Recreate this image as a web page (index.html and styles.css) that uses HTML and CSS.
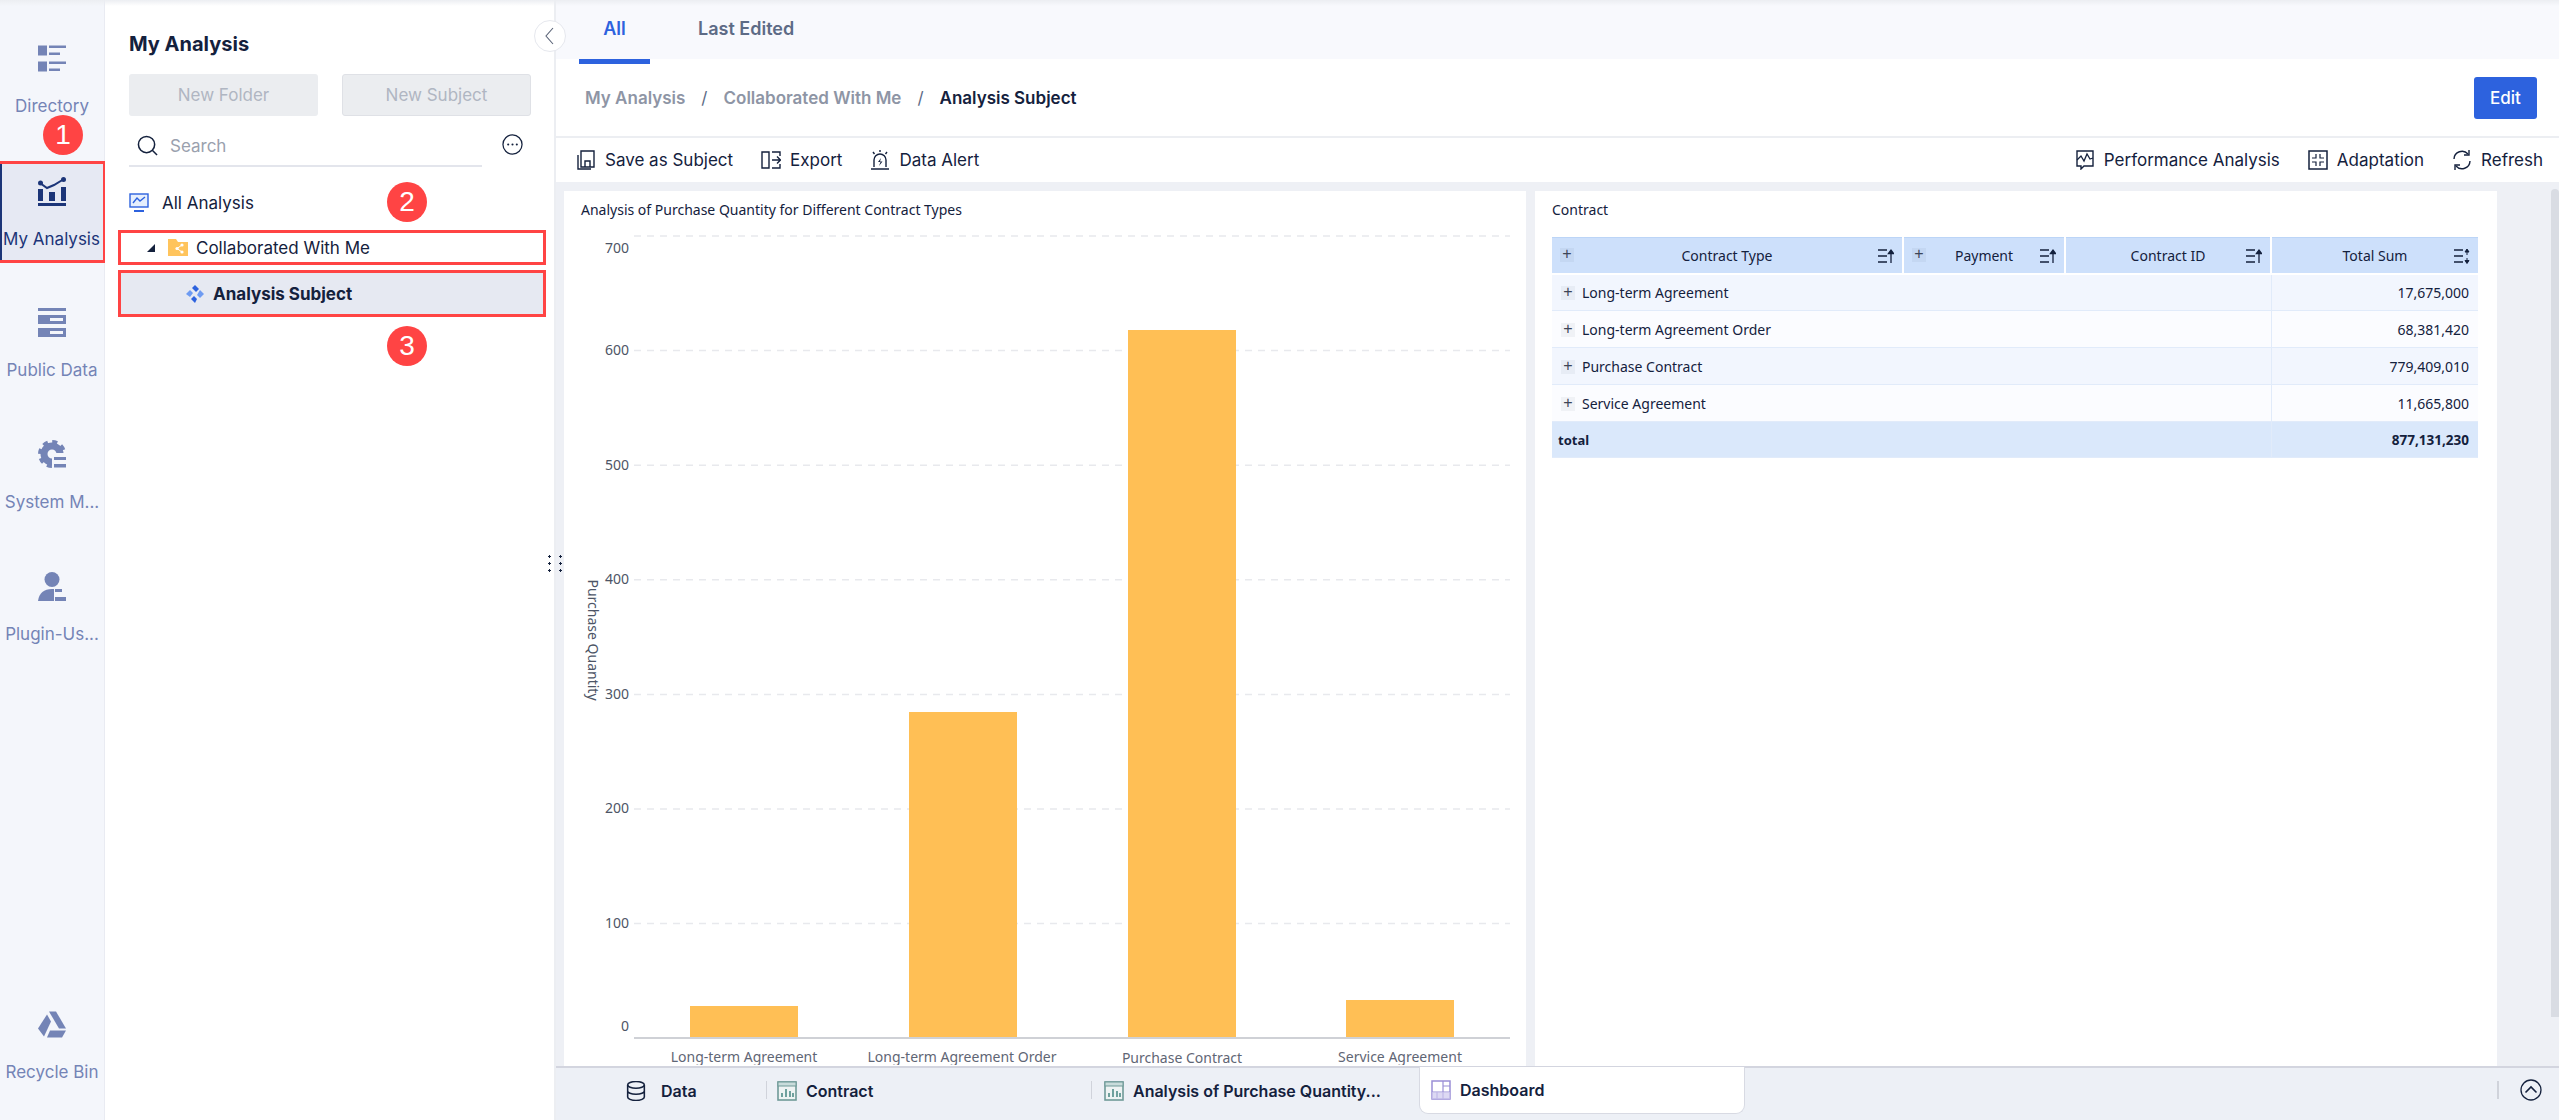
FILE: index.html
```html
<!DOCTYPE html>
<html lang="en">
<head>
  <meta charset="UTF-8">
  <title>My Analysis</title>
  <link rel="stylesheet" href="styles.css">
</head>
<body>
  <div class="top-shade"></div>

  <!-- left rail -->
  <nav class="rail">
    <div class="rail-item">
      <svg class="rail-icon" viewBox="0 0 28 26"><rect x="0" y="0" width="9" height="10"/><rect x="11" y="0" width="17" height="2.5"/><rect x="11" y="7" width="11" height="2.5"/><rect x="0" y="16" width="9" height="10"/><rect x="11" y="16" width="17" height="2.5"/><rect x="11" y="23" width="11" height="2.5"/></svg>
      <span>Directory</span>
    </div>
    <div class="rail-item active">
      <svg class="rail-icon" viewBox="0 0 28 29"><path d="M2 6 L9 11 L16 8 L26 2" fill="none" stroke="#1c3578" stroke-width="2"/><circle cx="2.5" cy="6" r="2.5"/><circle cx="25.5" cy="2.5" r="2.5"/><rect x="0" y="12" width="5" height="12"/><rect x="11" y="15" width="6" height="9"/><rect x="23" y="10" width="5" height="14"/><rect x="0" y="26" width="28" height="3"/></svg>
      <span>My Analysis</span>
    </div>
    <div class="rail-item">
      <svg class="rail-icon" viewBox="0 0 28 29"><rect x="0" y="0" width="28" height="3"/><path fill-rule="evenodd" d="M0 7H28V16H0ZM12 10V13H25V10Z"/><path fill-rule="evenodd" d="M0 20H28V29H0ZM12 23V26H25V23Z"/></svg>
      <span>Public Data</span>
    </div>
    <div class="rail-item">
      <svg class="rail-icon" viewBox="0 0 28 29"><circle cx="14" cy="14" r="8" fill="none" stroke="#7484b6" stroke-width="7"/><circle cx="14" cy="14" r="12" fill="none" stroke="#7484b6" stroke-width="4" stroke-dasharray="5 4.4"/><rect x="14" y="13" width="14" height="16" fill="#f4f6fb"/><rect x="16" y="17" width="12" height="3"/><rect x="16" y="24" width="12" height="3.5"/></svg>
      <span>System M...</span>
    </div>
    <div class="rail-item">
      <svg class="rail-icon" viewBox="0 0 28 29"><circle cx="14" cy="7.5" r="7.5"/><path d="M0 29 C1 21 6 17 14 17 L16 17 L16 29Z"/><rect x="17" y="17" width="7" height="3"/><rect x="17" y="25" width="11" height="4"/></svg>
      <span>Plugin-Us...</span>
    </div>
    <div class="rail-item bottom">
      <svg class="rail-icon" viewBox="0 0 28 26"><path d="M11 0H18L28 17H21Z"/><path d="M9 3L13 10L6 25L0 17Z"/><path d="M12 19H28L24 26H9Z"/></svg>
      <span>Recycle Bin</span>
    </div>
  </nav>

  <!-- tree panel -->
  <aside class="panel">
    <h2 class="panel-title">My Analysis</h2>
    <div class="panel-btns">
      <button class="btn-off">New Folder</button>
      <button class="btn-off bordered">New Subject</button>
    </div>
    <div class="search-row">
      <div class="search">
        <svg class="ico-search" viewBox="0 0 22 22"><circle cx="10" cy="10" r="8.5" fill="none" stroke="#14213d" stroke-width="1.6"/><path d="M16 16L21 21" stroke="#14213d" stroke-width="1.6"/></svg>
        <span>Search</span>
      </div>
      <svg class="ico-more" viewBox="0 0 22 22"><circle cx="11" cy="11" r="10" fill="none" stroke="#14213d" stroke-width="1.3"/><circle cx="6.5" cy="11" r="1.1" fill="#14213d"/><circle cx="11" cy="11" r="1.1" fill="#14213d"/><circle cx="15.5" cy="11" r="1.1" fill="#14213d"/></svg>
    </div>
    <div class="tree-all">
      <svg class="ico-all" viewBox="0 0 20 20"><rect x="1" y="1" width="18" height="13" fill="#e6effd" stroke="#2d62de" stroke-width="1.4"/><path d="M4 10L8 5L11 8L16 4" fill="none" stroke="#2d62de" stroke-width="1.4"/><rect x="5" y="17" width="10" height="2" fill="#2d62de"/></svg>
      <span>All Analysis</span>
    </div>
    <div class="tree-folder">
      <i class="tri"></i>
      <svg class="ico-folder" viewBox="0 0 20 17"><path d="M0 0H8L10 3H20V17H0Z" fill="#ffc45c"/><circle cx="14" cy="6" r="1.6" fill="#fff"/><circle cx="9" cy="9.5" r="1.6" fill="#fff"/><circle cx="14" cy="13" r="1.6" fill="#fff"/><path d="M14 6L9 9.5L14 13" fill="none" stroke="#fff"/></svg>
      <span>Collaborated With Me</span>
    </div>
    <div class="tree-subject">
      <svg class="ico-subject" viewBox="0 0 18 18"><path d="M9 0L13 4L10 7L6 3Z" fill="#2d62de"/><path d="M14 5L18 9L14 13L11 10Z" fill="#6e9bf2"/><path d="M8 11L11 14L9 18L5 14Z" fill="#2d62de"/><path d="M4 5L7 8L4 12L0 9Z" fill="#6e9bf2"/></svg>
      <span>Analysis Subject</span>
    </div>
    <b class="badge b1">1</b>
    <b class="badge b2">2</b>
    <b class="badge b3">3</b>
  </aside>

  <!-- main area -->
  <main class="main">
    <div class="tabs">
      <div class="tab on">All</div>
      <div class="tab">Last Edited</div>
    </div>
    <div class="crumbs">
      <span class="crumb">My Analysis</span><i>/</i>
      <span class="crumb">Collaborated With Me</span><i>/</i>
      <span class="crumb now">Analysis Subject</span>
      <button class="btn-edit">Edit</button>
    </div>
    <div class="toolbar">
      <div class="tool">
        <svg viewBox="0 0 18 20"><path d="M4 1H17V17H4Z M8 17V11H13V17" fill="none" stroke="#14213d" stroke-width="1.4"/><path d="M1 5V19H14" fill="none" stroke="#14213d" stroke-width="1.4"/></svg>
        <span>Save as Subject</span>
      </div>
      <div class="tool">
        <svg viewBox="0 0 20 20"><path d="M1 2H8V18H1Z M11 2H19V6 M19 14V18H11" fill="none" stroke="#14213d" stroke-width="1.4"/><path d="M11 10H19 M16 6.5L19.5 10L16 13.5" fill="none" stroke="#14213d" stroke-width="1.4"/></svg>
        <span>Export</span>
      </div>
      <div class="tool">
        <svg viewBox="0 0 18 20"><path d="M3 17V10A6 6 0 0 1 15 10V17 M0 19H18 M9 0V2 M2 2L3.5 4 M16 2L14.5 4" fill="none" stroke="#14213d" stroke-width="1.4"/><path d="M10 8L7 12H9.5L8 16L11.5 11.5H9Z" fill="#14213d"/></svg>
        <span>Data Alert</span>
      </div>
      <div class="tool push">
        <svg viewBox="0 0 18 20"><path d="M1 1H17V16H8L5 19V16H1Z" fill="none" stroke="#14213d" stroke-width="1.4"/><path d="M1 10L5 6L8 11L11 4L14 9L17 8" fill="none" stroke="#14213d" stroke-width="1.3"/></svg>
        <span>Performance Analysis</span>
      </div>
      <div class="tool">
        <svg viewBox="0 0 20 20"><rect x="1" y="1" width="18" height="18" fill="none" stroke="#14213d" stroke-width="1.5"/><path d="M8 4V8H4 M12 4V8H16 M8 16V12H4 M12 16V12H16" fill="none" stroke="#14213d" stroke-width="1.2"/></svg>
        <span>Adaptation</span>
      </div>
      <div class="tool">
        <svg viewBox="0 0 20 20"><path d="M2 9A8 8 0 0 1 16 4 M18 11A8 8 0 0 1 4 16" fill="none" stroke="#14213d" stroke-width="1.4"/><path d="M17 0V5H12 M3 20V15H8" fill="none" stroke="#14213d" stroke-width="1.4"/></svg>
        <span>Refresh</span>
      </div>
    </div>

    <div class="dash">
      <section class="card">
        <div class="card-title">Analysis of Purchase Quantity for Different Contract Types</div>
        <svg class="chart" viewBox="0 0 962 838" width="962" height="838">
          <g class="grid">
            <line x1="70" x2="946" y1="9" y2="9"/>
            <line x1="70" x2="946" y1="123.6" y2="123.6"/>
            <line x1="70" x2="946" y1="238.2" y2="238.2"/>
            <line x1="70" x2="946" y1="352.8" y2="352.8"/>
            <line x1="70" x2="946" y1="467.4" y2="467.4"/>
            <line x1="70" x2="946" y1="582" y2="582"/>
            <line x1="70" x2="946" y1="696.6" y2="696.6"/>
          </g>
          <g class="ylab">
            <text x="65" y="26">700</text>
            <text x="65" y="128">600</text>
            <text x="65" y="243">500</text>
            <text x="65" y="357">400</text>
            <text x="65" y="472">300</text>
            <text x="65" y="586">200</text>
            <text x="65" y="701">100</text>
            <text x="65" y="804">0</text>
          </g>
          <text class="ytitle" transform="translate(24 413) rotate(90)">Purchase Quantity</text>
          <g class="bars">
            <rect x="126" y="779" width="108" height="32"/>
            <rect x="345" y="485" width="108" height="326"/>
            <rect x="564" y="103" width="108" height="708"/>
            <rect x="782" y="773" width="108" height="38"/>
          </g>
          <line class="axis" x1="70" x2="946" y1="811" y2="811"/>
          <g class="xlab">
            <text x="180" y="835">Long-term Agreement</text>
            <text x="398" y="835">Long-term Agreement Order</text>
            <text x="618" y="836">Purchase Contract</text>
            <text x="836" y="835">Service Agreement</text>
          </g>
        </svg>
      </section>

      <section class="card">
        <div class="card-title">Contract</div>
        <table class="pivot">
          <colgroup><col class="c1"><col class="c2"><col class="c3"><col class="c4"></colgroup>
          <thead>
            <tr>
              <th><i class="plus">+</i>Contract Type<svg class="sort" viewBox="0 0 16 16"><path d="M0 2H9M0 8H9M0 14H9" stroke="#14213d" stroke-width="1.5"/><path d="M13 15V3M10.5 5.5L13 2L15.5 5.5Z" stroke="#14213d" stroke-width="1.3" fill="#14213d"/></svg></th>
              <th><i class="plus">+</i>Payment<svg class="sort" viewBox="0 0 16 16"><path d="M0 2H9M0 8H9M0 14H9" stroke="#14213d" stroke-width="1.5"/><path d="M13 15V3M10.5 5.5L13 2L15.5 5.5Z" stroke="#14213d" stroke-width="1.3" fill="#14213d"/></svg></th>
              <th>Contract ID<svg class="sort" viewBox="0 0 16 16"><path d="M0 2H9M0 8H9M0 14H9" stroke="#14213d" stroke-width="1.5"/><path d="M13 15V3M10.5 5.5L13 2L15.5 5.5Z" stroke="#14213d" stroke-width="1.3" fill="#14213d"/></svg></th>
              <th>Total Sum<svg class="sort" viewBox="0 0 16 16"><path d="M0 2H9M0 8H9M0 14H9" stroke="#14213d" stroke-width="1.5"/><path d="M13 7V2M11 4L13 1L15 4ZM13 10V15M11 12.5L13 15.5L15 12.5Z" stroke="#14213d" stroke-width="1" fill="#14213d"/></svg></th>
            </tr>
          </thead>
          <tbody>
            <tr><td colspan="3"><i class="plus">+</i>Long-term Agreement</td><td class="num">17,675,000</td></tr>
            <tr><td colspan="3"><i class="plus">+</i>Long-term Agreement Order</td><td class="num">68,381,420</td></tr>
            <tr><td colspan="3"><i class="plus">+</i>Purchase Contract</td><td class="num">779,409,010</td></tr>
            <tr><td colspan="3"><i class="plus">+</i>Service Agreement</td><td class="num">11,665,800</td></tr>
            <tr class="total"><td colspan="3">total</td><td class="num">877,131,230</td></tr>
          </tbody>
        </table>
      </section>
      <div class="scroll-thumb"></div>
    </div>

    <footer class="sheets">
      <div class="sheet first">
        <svg viewBox="0 0 17 18"><ellipse cx="8.5" cy="3.5" rx="7.5" ry="3" fill="none" stroke="#14213d" stroke-width="1.4"/><path d="M1 3.5V14.5C1 16 4 17.5 8.5 17.5S16 16 16 14.5V3.5 M1 9C1 10.5 4 12 8.5 12S16 10.5 16 9" fill="none" stroke="#14213d" stroke-width="1.4"/></svg>
        <span>Data</span>
      </div>
      <div class="sheet sep">
        <svg viewBox="0 0 20 20"><rect x="1" y="1" width="18" height="18" fill="#eef3f3" stroke="#6f9a98" stroke-width="1.6"/><rect x="1" y="1" width="18" height="4" fill="#c9dcdb" stroke="#6f9a98" stroke-width="1"/><path d="M5 16V12M9 16V8M13 16V10M16 16V12" stroke="#4f8c88" stroke-width="1.6"/></svg>
        <span>Contract</span>
      </div>
      <div class="sheet sep two">
        <svg viewBox="0 0 20 20"><rect x="1" y="1" width="18" height="18" fill="#eef3f3" stroke="#6f9a98" stroke-width="1.6"/><rect x="1" y="1" width="18" height="4" fill="#c9dcdb" stroke="#6f9a98" stroke-width="1"/><path d="M5 16V12M9 16V8M13 16V10M16 16V12" stroke="#4f8c88" stroke-width="1.6"/></svg>
        <span>Analysis of Purchase Quantity...</span>
      </div>
      <div class="sheet cur">
        <svg viewBox="0 0 20 20"><rect x="1" y="1" width="18" height="18" fill="#fff" stroke="#9a8fd6" stroke-width="1.5"/><path d="M1 12H19M12 1V19M12 6H19M6 12V19" stroke="#9a8fd6" stroke-width="1.2"/><rect x="1" y="12" width="18" height="7" fill="#cfc9ee" fill-opacity=".7"/></svg>
        <span>Dashboard</span>
      </div>
      <div class="sheets-end">
        <svg viewBox="0 0 22 22"><circle cx="11" cy="11" r="10" fill="none" stroke="#14213d" stroke-width="1.3"/><path d="M5.5 13.5L11 8L16.5 13.5" fill="none" stroke="#14213d" stroke-width="1.6"/></svg>
      </div>
    </footer>
  </main>

  <div class="collapse">
    <svg viewBox="0 0 10 18"><path d="M8 1L1 9L8 17" fill="none" stroke="#5b6478" stroke-width="1.1"/></svg>
  </div>
  <div class="drag"><i></i><i></i></div>
</body>
</html>
```

FILE: styles.css
```css
* {
  box-sizing: border-box;
}
html, body {
  height: 100%;
}
body {
  margin: 0;
  display: flex;
  height: 1120px;
  overflow: hidden;
  font-family: Inter, 'Liberation Sans', sans-serif;
  color: #14213d;
  position: relative;
}
svg {
  display: block;
  flex: none;
}
.top-shade {
  position: absolute;
  left: 0;
  top: 0;
  right: 0;
  height: 6px;
  background: linear-gradient(#eceef2, rgba(236, 238, 242, 0));
}

/* rail */
.rail {
  width: 105px;
  flex: none;
  background: #f4f6fb;
  border-right: 1px solid #e9ebf2;
  padding-top: 29px;
  display: flex;
  flex-direction: column;
  gap: 30px;
}
.rail-item {
  height: 102px;
  padding-top: 15px;
  display: flex;
  flex-direction: column;
  align-items: center;
  font-size: 17px;
  color: #7484b6;
  white-space: nowrap;
}
.rail-item span {
  margin-top: 23px;
  line-height: 20px;
}
.rail-icon {
  width: 28px;
  height: 29px;
  fill: #7484b6;
}
.rail-item.active {
  width: 106px;
  background: #e6e9f3;
  border: 3px solid #ff4444;
  border-left: 0;
  box-shadow: inset 2px 0 0 #1c3578;
  color: #1c3578;
  padding-top: 13px;
}
.rail-item.active .rail-icon {
  fill: #1c3578;
}
.rail-item.bottom {
  margin-top: auto;
  margin-bottom: 23px;
}

/* tree panel */
.panel {
  width: 449px;
  flex: none;
  background: #fff;
  padding: 32px 8px 0 13px;
}
.panel-title {
  margin: 0 0 18px 11px;
  font-size: 20px;
  line-height: 24px;
  font-weight: 700;
}
.panel-btns {
  display: flex;
  gap: 24px;
  margin-left: 11px;
}
.btn-off {
  width: 189px;
  height: 42px;
  border: 0;
  border-radius: 3px;
  background: #ebedf0;
  color: #b0b6c2;
  font: 17px Inter, 'Liberation Sans', sans-serif;
}
.btn-off.bordered {
  border: 1px solid #dfe1e6;
}
.search-row {
  display: flex;
  align-items: flex-start;
  margin: 16px 0 0 11px;
}
.search {
  width: 353px;
  height: 35px;
  border-bottom: 2px solid #e3e5ec;
  display: flex;
  padding: 3px 0 0 8px;
  gap: 12px;
  font-size: 17px;
  line-height: 22px;
  color: #9aa1ae;
}
.ico-search {
  width: 21px;
  height: 21px;
}
.ico-more {
  width: 21px;
  height: 21px;
  margin: 2px 0 0 20px;
}
.tree-all {
  display: flex;
  align-items: center;
  gap: 13px;
  margin: 25px 0 0 11px;
  font-size: 17px;
  line-height: 22px;
}
.ico-all {
  width: 20px;
  height: 20px;
}
.tree-folder {
  height: 35px;
  border: 3px solid #ff4444;
  margin-top: 16px;
  display: flex;
  align-items: center;
  padding-left: 26px;
  font-size: 17px;
}
.tri {
  width: 0;
  height: 0;
  border-left: 8px solid transparent;
  border-bottom: 8px solid #14213d;
  margin-right: 13px;
}
.ico-folder {
  width: 20px;
  height: 17px;
  margin-right: 8px;
}
.tree-subject {
  height: 47px;
  border: 3px solid #ff4444;
  margin-top: 5px;
  background: #e6e9f2;
  display: flex;
  align-items: center;
  padding-left: 65px;
  gap: 9px;
  font-size: 17px;
  font-weight: 700;
}
.ico-subject {
  width: 18px;
  height: 18px;
}
.badge {
  position: absolute;
  width: 40px;
  height: 40px;
  border-radius: 50%;
  background: #ff4444;
  color: #fff;
  font: 400 28px/40px 'Liberation Sans', sans-serif;
  text-align: center;
}
.b1 { left: 43px; top: 115px; }
.b2 { left: 387px; top: 182px; }
.b3 { left: 387px; top: 326px; }

/* main */
.main {
  flex: 1;
  min-width: 0;
  display: flex;
  flex-direction: column;
  border-left: 2px solid #eceef2;
  background: #fff;
}
.tabs {
  height: 64px;
  flex: none;
  display: flex;
  padding-left: 23px;
  background: linear-gradient(#f8f9fd 59px, #fff 59px);
}
.tab {
  height: 64px;
  font-size: 18px;
  line-height: 58px;
  font-weight: 600;
  color: #5d6b86;
  margin-right: 48px;
}
.tab.on {
  width: 71px;
  text-align: center;
  color: #2d62de;
  border-bottom: 5px solid #2d62de;
}
.crumbs {
  height: 74px;
  flex: none;
  display: flex;
  align-items: center;
  padding: 0 22px 5px 29px;
  border-bottom: 2px solid #eceef2;
  font-size: 17px;
  font-weight: 600;
  color: #8e95a5;
}
.crumbs i {
  font-style: normal;
  margin: 0 16px;
  font-weight: 400;
  color: #5d6b86;
}
.crumb.now {
  color: #14213d;
}
.btn-edit {
  margin-left: auto;
  width: 63px;
  height: 42px;
  border: 0;
  border-radius: 3px;
  background: #2d62de;
  color: #fff;
  font: 500 17px Inter, 'Liberation Sans', sans-serif;
}
.toolbar {
  height: 44px;
  flex: none;
  display: flex;
  align-items: center;
  padding: 0 16px 0 20px;
  gap: 28px;
  font-size: 17px;
}
.tool {
  display: flex;
  align-items: center;
  gap: 9px;
  white-space: nowrap;
}
.tool svg {
  width: 20px;
  height: 20px;
}
.tool.push {
  margin-left: auto;
}
.dash {
  flex: 1;
  min-height: 0;
  background: #eef0f5;
  padding: 9px 62px 0 8px;
  display: flex;
  gap: 9px;
  position: relative;
  overflow: hidden;
}
.card {
  width: 962px;
  flex: none;
  background: #fff;
  overflow: hidden;
}
.card-title {
  height: 36px;
  padding: 10px 0 0 17px;
  font: 14px/18px 'Noto Sans', 'Open Sans', sans-serif;
}
.chart {
  font-family: 'Noto Sans', 'Open Sans', sans-serif;
}
.grid line {
  stroke: #e8e9ed;
  stroke-width: 1.5;
  stroke-dasharray: 7 6;
}
.ylab text {
  font-size: 14px;
  fill: #4d5566;
  text-anchor: end;
}
.ytitle {
  font-size: 14px;
  fill: #4d5566;
  text-anchor: middle;
}
.bars rect {
  fill: #ffbf55;
}
.axis {
  stroke: #cfd1d6;
  stroke-width: 2;
}
.xlab text {
  font-size: 14px;
  fill: #5f6675;
  text-anchor: middle;
}

/* pivot table */
.pivot {
  margin: 10px 0 0 17px;
  width: 926px;
  table-layout: fixed;
  border-collapse: collapse;
  font: 14px 'Noto Sans', 'Open Sans', sans-serif;
}
.c1 { width: 351px; }
.c2 { width: 162px; }
.c3 { width: 206px; }
.c4 { width: 207px; }
.pivot th {
  height: 36px;
  padding: 0 26px 0 26px;
  background: #cde0fb;
  border-right: 2px solid #fff;
  border-bottom: 2px solid #fff;
  border-top: 1px solid #bcd5f7;
  font-weight: 400;
  text-align: center;
  position: relative;
}
.pivot th:last-child {
  border-right: 0;
}
.pivot td {
  height: 37px;
  padding: 0 9px;
  border-bottom: 1px solid #e1ebfa;
}
.pivot td.num {
  text-align: right;
  border-left: 1px solid #e1ebfa;
}
.pivot tbody tr:nth-child(odd) td {
  background: #f2f6fe;
}
.pivot tbody tr:nth-child(even) td {
  background: #fbfcff;
}
.pivot tbody tr.total td {
  background: #dae8fb;
  font-weight: 700;
  height: 36px;
  font-size: 13.5px;
}
.pivot tbody tr.total td:first-child {
  padding-left: 6px;
  font-size: 13px;
}
.plus {
  display: inline-block;
  width: 14px;
  height: 14px;
  margin-right: 7px;
  background: rgba(60, 80, 110, .06);
  font: 16px/12px 'Liberation Sans', sans-serif;
  text-align: center;
  color: #3c4557;
  vertical-align: 1px;
}
.pivot th .plus {
  position: absolute;
  left: 8px;
  top: 10px;
  margin: 0;
}
.sort {
  position: absolute;
  right: 8px;
  top: 10px;
  width: 16px;
  height: 16px;
}
.scroll-thumb {
  position: absolute;
  right: 0;
  top: 7px;
  width: 8px;
  height: 828px;
  border-radius: 4px 4px 0 0;
  background: #d9dce3;
}

/* sheet bar */
.sheets {
  height: 54px;
  flex: none;
  display: flex;
  background: #edf0f6;
  border-top: 2px solid #d3d5df;
  font-size: 16px;
  font-weight: 600;
}
.sheet {
  display: flex;
  align-items: center;
  gap: 9px;
  height: 46px;
  position: relative;
}
.sheet svg {
  width: 20px;
  height: 20px;
}
.sheet.first {
  width: 210px;
  padding-left: 70px;
  gap: 15px;
}
.sheet.sep {
  width: 325px;
  padding-left: 11px;
}
.sheet.two {
  width: 328px;
  padding-left: 13px;
}
.sheet.sep::before {
  content: '';
  position: absolute;
  left: 0;
  top: 13px;
  height: 18px;
  width: 1px;
  background: #d0d3db;
}
.sheet.cur {
  width: 326px;
  padding-left: 11px;
  background: #fff;
  border: 1px solid #d8dae3;
  border-top: 0;
  border-radius: 0 0 9px 9px;
  margin-top: -1px;
  height: 47px;
}
.sheets-end {
  margin-left: auto;
  margin-right: 17px;
  padding-left: 21px;
  display: flex;
  align-items: center;
  height: 18px;
  margin-top: 13px;
  border-left: 2px solid #d0d3db;
}
.sheets-end svg {
  width: 22px;
  height: 22px;
}

/* overlays on the panel edge */
.collapse {
  position: absolute;
  left: 534px;
  top: 20px;
  width: 32px;
  height: 32px;
  border-radius: 50%;
  background: #fff;
  border: 1px solid #e6e8ee;
  display: flex;
  align-items: center;
  justify-content: center;
}
.collapse svg {
  width: 10px;
  height: 18px;
}
.drag {
  position: absolute;
  left: 548px;
  top: 553px;
  display: flex;
  gap: 8px;
}
.drag i {
  width: 3px;
  height: 20px;
  background: radial-gradient(circle, #14213d 1px, transparent 1.4px) 0 0 / 3px 7px;
}
```
